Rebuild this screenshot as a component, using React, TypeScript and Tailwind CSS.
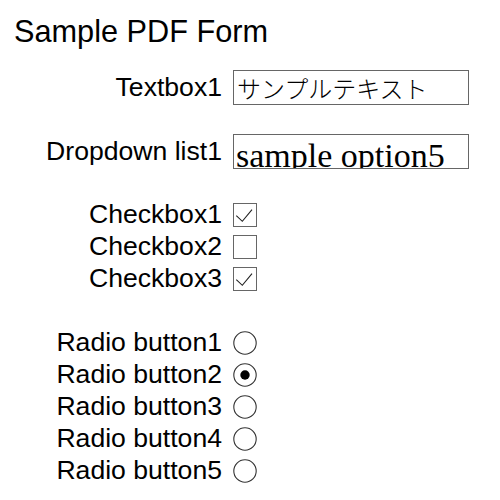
import React from "react"

const labelFont = { fontFamily: '"Liberation Sans", Arial, sans-serif' }

function Row({ label, className = "", children }: { label: string; className?: string; children: React.ReactNode }) {
  return (
    <div className={`flex items-center ${className}`}>
      <div className="w-[222px] shrink-0 text-right text-[26.6px] leading-none text-black">{label}</div>
      <div className="ml-[11px] flex items-center">{children}</div>
    </div>
  )
}

function Checkbox({ checked }: { checked?: boolean }) {
  return (
    <div className="h-[24px] w-[24px] border border-[#666] bg-white">
      {checked && (
        <svg width="22" height="22" viewBox="0 0 22 22" className="block">
          <path d="M2.3 11.7 L8.3 17.3 L18 5.7" fill="none" stroke="#222" strokeWidth="1.1" />
        </svg>
      )}
    </div>
  )
}

function Radio({ checked }: { checked?: boolean }) {
  return (
    <svg width="24" height="24" viewBox="0 0 24 24" className="block">
      <circle cx="12" cy="12" r="11.2" fill="white" stroke="#333" strokeWidth="1.1" />
      {checked && <circle cx="12" cy="12" r="4.7" fill="black" />}
    </svg>
  )
}

export default function App() {
  return (
    <div className="h-[500px] w-[500px] bg-white pl-[14px] pt-[17px]" style={labelFont}>
      <h1 className="text-[30.7px] leading-none text-black">Sample PDF Form</h1>

      <div className="-ml-[14px]">
        <Row label="Textbox1" className="mt-[22px] h-[35px]">
          <div
            className="h-[35px] w-[236px] overflow-hidden border border-[#666] pl-[3px] pt-[5px] text-[24px] leading-none text-black"
            style={{ fontFamily: '"Noto Sans CJK JP", sans-serif', fontWeight: 300 }}
          >
            サンプルテキスト
          </div>
        </Row>

        <Row label="Dropdown list1" className="mt-[29px] h-[35px]">
          <div
            className="h-[35px] w-[236px] overflow-hidden border border-[#666] pl-[2px] pt-[4px] text-[34px] leading-none text-black"
            style={{ fontFamily: '"Liberation Serif", "Times New Roman", serif' }}
          >
            sample option5
          </div>
        </Row>

        <div className="mt-[30px]">
          <Row label="Checkbox1" className="h-[32px]">
            <Checkbox checked />
          </Row>
          <Row label="Checkbox2" className="h-[32px]">
            <Checkbox />
          </Row>
          <Row label="Checkbox3" className="h-[32px]">
            <Checkbox checked />
          </Row>
        </div>

        <div className="mt-[32px]">
          {[1, 2, 3, 4, 5].map((n) => (
            <Row key={n} label={`Radio button${n}`} className="h-[32px]">
              <Radio checked={n === 2} />
            </Row>
          ))}
        </div>
      </div>
    </div>
  )
}
